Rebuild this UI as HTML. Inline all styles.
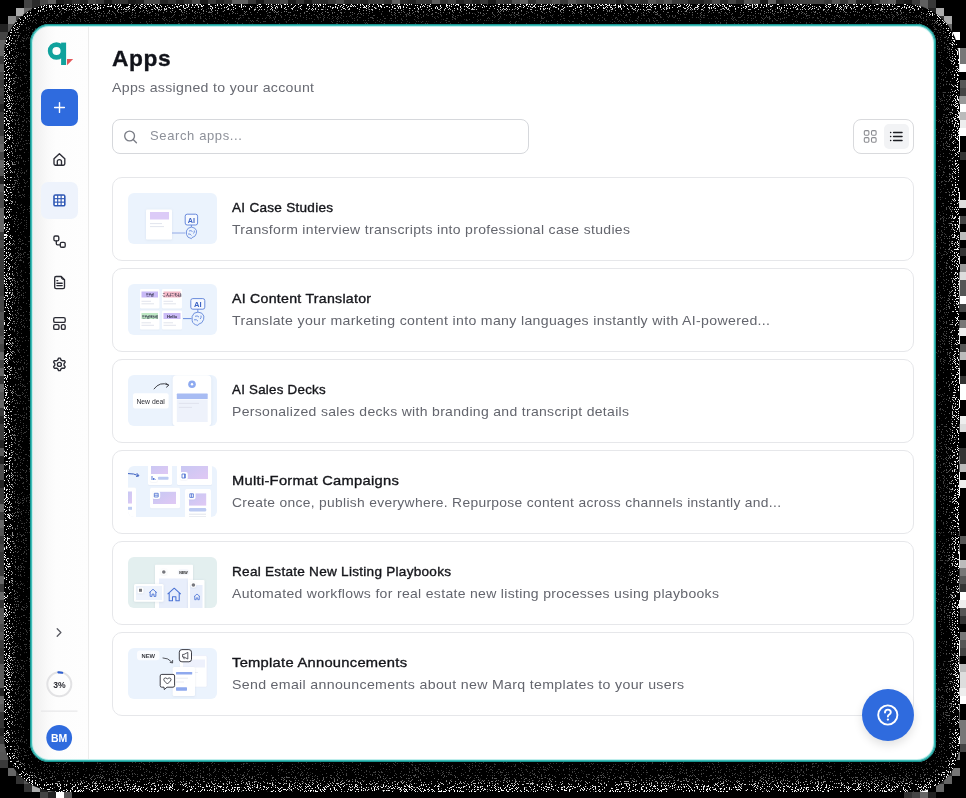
<!DOCTYPE html>
<html><head><meta charset="utf-8">
<style>
*{box-sizing:border-box;margin:0;padding:0}
html,body{width:966px;height:798px;overflow:hidden;background:#000}
body{position:relative;font-family:"Liberation Sans",sans-serif}
#win{will-change:transform}
#bg{position:absolute;left:0;top:0}
#win{position:absolute;left:30px;top:24px;width:906px;height:738px;border-radius:19px;background:#fff;
  border:2px solid #3aaeab;overflow:hidden}
#rim{position:absolute;left:30px;top:24px;width:906px;height:738px;border-radius:19px;border:1px solid #17948f;box-shadow:inset 0 0 0 1px #3ebcb7, inset 0 0 0 2px #c0eeec;pointer-events:none}
#side{position:absolute;left:0;top:0;width:57px;height:100%;
  background:linear-gradient(90deg,#eeeeee 0px,#f4f4f4 8px,#fafafa 16px,#fdfdfd 24px,#fefefe 100%);border-right:1px solid #ececec}
.abs{position:absolute}
h1{position:absolute;left:80px;top:20px;font-size:22px;font-weight:700;color:#11131a;letter-spacing:0.6px;-webkit-text-stroke:0.3px #11131a;transform-origin:0 0;transform:scaleX(1.035)}
.sub{position:absolute;left:80px;top:54px;font-size:13px;color:#686a72;letter-spacing:0.3px;white-space:nowrap;transform-origin:0 0;transform:scaleX(1.085)}
#search{position:absolute;left:80px;top:93px;width:417px;height:35px;border:1px solid #d6d8dc;border-radius:8px}
#search span{position:absolute;left:37px;top:8px;font-size:13px;color:#8d9099;letter-spacing:0.62px;white-space:nowrap}
#toggle{position:absolute;left:821px;top:93px;width:61px;height:35px;border:1px solid #d9dadd;border-radius:8px}
.card{position:absolute;left:80px;width:802px;height:84px;border:1px solid #e6e7ea;border-radius:10px;background:#fff}
.thumb{position:absolute;left:15px;top:15px;width:89px;height:51px;border-radius:6px;background:#ebf3fd;overflow:hidden}
.ttl{transform-origin:0 0;position:absolute;left:119px;top:22px;font-size:13px;color:#15161b;-webkit-text-stroke:0.35px #15161b;white-space:nowrap}
.dsc{transform-origin:0 0;position:absolute;left:119px;top:44px;font-size:13px;color:#63656d;white-space:nowrap}
#help{position:absolute;left:830px;top:663px;width:52px;height:52px;border-radius:50%;background:#2f6bde;
  box-shadow:0 4px 10px rgba(0,0,0,0.12)}
</style></head><body>
<svg id="bg" width="966" height="798">
<defs>
<filter id="dn" x="0" y="0" width="966" height="798" filterUnits="userSpaceOnUse" color-interpolation-filters="sRGB">
<feTurbulence type="fractalNoise" baseFrequency="1.35" numOctaves="1" seed="4" result="n"/>
<feColorMatrix in="n" type="matrix" values="1 0 0 0 0 1 0 0 0 0 1 0 0 0 0 0 0 0 0 1" result="n2"/>
<feComposite in="n2" in2="SourceGraphic" operator="arithmetic" k1="0" k2="1" k3="1" k4="-1" result="c"/>
<feColorMatrix in="c" type="matrix" values="0 0 0 0 1 0 0 0 0 1 0 0 0 0 1 40 0 0 0 -4"/>
</filter>
<mask id="bm" maskUnits="userSpaceOnUse" x="0" y="0" width="966" height="798"><path d="M54.00,4.00 H905.00 A54.00,54.00 0 0 1 959.00,58.00 V747.00 A45.00,45.00 0 0 1 914.00,792.00 H59.00 A55.00,55.00 0 0 1 4.00,737.00 V54.00 A50.00,50.00 0 0 1 54.00,4.00 Z" fill="#ffffff"/><path d="M53.69,5.25 H905.75 A51.81,51.81 0 0 1 957.56,57.06 V746.75 A43.38,43.38 0 0 1 914.19,790.12 H58.38 A52.75,52.75 0 0 1 5.62,737.38 V53.31 A48.06,48.06 0 0 1 53.69,5.25 Z" fill="#f7f7f7"/><path d="M53.38,6.50 H906.50 A49.62,49.62 0 0 1 956.12,56.12 V746.50 A41.75,41.75 0 0 1 914.38,788.25 H57.75 A50.50,50.50 0 0 1 7.25,737.75 V52.62 A46.12,46.12 0 0 1 53.38,6.50 Z" fill="#efefef"/><path d="M53.06,7.75 H907.25 A47.44,47.44 0 0 1 954.69,55.19 V746.25 A40.12,40.12 0 0 1 914.56,786.38 H57.12 A48.25,48.25 0 0 1 8.88,738.12 V51.94 A44.19,44.19 0 0 1 53.06,7.75 Z" fill="#e7e7e7"/><path d="M52.75,9.00 H908.00 A45.25,45.25 0 0 1 953.25,54.25 V746.00 A38.50,38.50 0 0 1 914.75,784.50 H56.50 A46.00,46.00 0 0 1 10.50,738.50 V51.25 A42.25,42.25 0 0 1 52.75,9.00 Z" fill="#bdbdbd"/><path d="M52.44,10.25 H908.75 A43.06,43.06 0 0 1 951.81,53.31 V745.75 A36.88,36.88 0 0 1 914.94,782.62 H55.88 A43.75,43.75 0 0 1 12.12,738.88 V50.56 A40.31,40.31 0 0 1 52.44,10.25 Z" fill="#8a8a8a"/><path d="M52.12,11.50 H909.50 A40.88,40.88 0 0 1 950.38,52.38 V745.50 A35.25,35.25 0 0 1 915.12,780.75 H55.25 A41.50,41.50 0 0 1 13.75,739.25 V49.88 A38.38,38.38 0 0 1 52.12,11.50 Z" fill="#666666"/><path d="M51.81,12.75 H910.25 A38.69,38.69 0 0 1 948.94,51.44 V745.25 A33.62,33.62 0 0 1 915.31,778.88 H54.62 A39.25,39.25 0 0 1 15.38,739.62 V49.19 A36.44,36.44 0 0 1 51.81,12.75 Z" fill="#595959"/><path d="M51.50,14.00 H911.00 A36.50,36.50 0 0 1 947.50,50.50 V745.00 A32.00,32.00 0 0 1 915.50,777.00 H54.00 A37.00,37.00 0 0 1 17.00,740.00 V48.50 A34.50,34.50 0 0 1 51.50,14.00 Z" fill="#4d4d4d"/><path d="M51.19,15.25 H911.75 A34.31,34.31 0 0 1 946.06,49.56 V744.75 A30.38,30.38 0 0 1 915.69,775.12 H53.38 A34.75,34.75 0 0 1 18.62,740.38 V47.81 A32.56,32.56 0 0 1 51.19,15.25 Z" fill="#424242"/><path d="M50.88,16.50 H912.50 A32.12,32.12 0 0 1 944.62,48.62 V744.50 A28.75,28.75 0 0 1 915.88,773.25 H52.75 A32.50,32.50 0 0 1 20.25,740.75 V47.12 A30.62,30.62 0 0 1 50.88,16.50 Z" fill="#404040"/><path d="M50.56,17.75 H913.25 A29.94,29.94 0 0 1 943.19,47.69 V744.25 A27.12,27.12 0 0 1 916.06,771.38 H52.12 A30.25,30.25 0 0 1 21.88,741.12 V46.44 A28.69,28.69 0 0 1 50.56,17.75 Z" fill="#3e3e3e"/><path d="M50.25,19.00 H914.00 A27.75,27.75 0 0 1 941.75,46.75 V744.00 A25.50,25.50 0 0 1 916.25,769.50 H51.50 A28.00,28.00 0 0 1 23.50,741.50 V45.75 A26.75,26.75 0 0 1 50.25,19.00 Z" fill="#3c3c3c"/><path d="M49.94,20.25 H914.75 A25.56,25.56 0 0 1 940.31,45.81 V743.75 A23.88,23.88 0 0 1 916.44,767.62 H50.88 A25.75,25.75 0 0 1 25.12,741.88 V45.06 A24.81,24.81 0 0 1 49.94,20.25 Z" fill="#393939"/><path d="M49.62,21.50 H915.50 A23.38,23.38 0 0 1 938.88,44.88 V743.50 A22.25,22.25 0 0 1 916.62,765.75 H50.25 A23.50,23.50 0 0 1 26.75,742.25 V44.38 A22.88,22.88 0 0 1 49.62,21.50 Z" fill="#373737"/><path d="M49.31,22.75 H916.25 A21.19,21.19 0 0 1 937.44,43.94 V743.25 A20.62,20.62 0 0 1 916.81,763.88 H49.62 A21.25,21.25 0 0 1 28.38,742.62 V43.69 A20.94,20.94 0 0 1 49.31,22.75 Z" fill="#353535"/><path d="M49.00,24.00 H917.00 A19.00,19.00 0 0 1 936.00,43.00 V743.00 A19.00,19.00 0 0 1 917.00,762.00 H49.00 A19.00,19.00 0 0 1 30.00,743.00 V43.00 A19.00,19.00 0 0 1 49.00,24.00 Z" fill="#333333"/></mask>
<clipPath id="aura"><path d="M54.00,4.00 H905.00 A54.00,54.00 0 0 1 959.00,58.00 V747.00 A45.00,45.00 0 0 1 914.00,792.00 H59.00 A55.00,55.00 0 0 1 4.00,737.00 V54.00 A50.00,50.00 0 0 1 54.00,4.00 Z"/></clipPath>
</defs>
<rect width="966" height="798" fill="#000"/>
<rect x="24" y="0" width="8" height="8" fill="#444444"/><rect x="32" y="0" width="8" height="8" fill="#2a2a2a"/><rect x="40" y="0" width="8" height="8" fill="#4a4a4a"/><rect x="48" y="0" width="8" height="8" fill="#606060"/><rect x="56" y="0" width="8" height="8" fill="#1a1a1a"/><rect x="64" y="0" width="8" height="8" fill="#222222"/><rect x="72" y="0" width="8" height="8" fill="#303030"/><rect x="80" y="0" width="8" height="8" fill="#222222"/><rect x="88" y="0" width="8" height="8" fill="#444444"/><rect x="96" y="0" width="8" height="8" fill="#383838"/><rect x="104" y="0" width="8" height="8" fill="#1a1a1a"/><rect x="112" y="0" width="8" height="8" fill="#303030"/><rect x="120" y="0" width="8" height="8" fill="#333333"/><rect x="128" y="0" width="8" height="8" fill="#1a1a1a"/><rect x="136" y="0" width="8" height="8" fill="#222222"/><rect x="144" y="0" width="8" height="8" fill="#4a4a4a"/><rect x="152" y="0" width="8" height="8" fill="#4a4a4a"/><rect x="160" y="0" width="8" height="8" fill="#222222"/><rect x="168" y="0" width="8" height="8" fill="#333333"/><rect x="176" y="0" width="8" height="8" fill="#222222"/><rect x="184" y="0" width="8" height="8" fill="#303030"/><rect x="192" y="0" width="8" height="8" fill="#4a4a4a"/><rect x="200" y="0" width="8" height="8" fill="#1a1a1a"/><rect x="208" y="0" width="8" height="8" fill="#383838"/><rect x="216" y="0" width="8" height="8" fill="#222222"/><rect x="224" y="0" width="8" height="8" fill="#333333"/><rect x="232" y="0" width="8" height="8" fill="#606060"/><rect x="240" y="0" width="8" height="8" fill="#606060"/><rect x="248" y="0" width="8" height="8" fill="#383838"/><rect x="256" y="0" width="8" height="8" fill="#1a1a1a"/><rect x="264" y="0" width="8" height="8" fill="#383838"/><rect x="272" y="0" width="8" height="8" fill="#383838"/><rect x="280" y="0" width="8" height="8" fill="#4a4a4a"/><rect x="288" y="0" width="8" height="8" fill="#1a1a1a"/><rect x="296" y="0" width="8" height="8" fill="#333333"/><rect x="304" y="0" width="8" height="8" fill="#1a1a1a"/><rect x="312" y="0" width="8" height="8" fill="#303030"/><rect x="320" y="0" width="8" height="8" fill="#2a2a2a"/><rect x="328" y="0" width="8" height="8" fill="#3a3a3a"/><rect x="336" y="0" width="8" height="8" fill="#4a4a4a"/><rect x="344" y="0" width="8" height="8" fill="#2a2a2a"/><rect x="352" y="0" width="8" height="8" fill="#303030"/><rect x="360" y="0" width="8" height="8" fill="#222222"/><rect x="368" y="0" width="8" height="8" fill="#383838"/><rect x="376" y="0" width="8" height="8" fill="#3a3a3a"/><rect x="384" y="0" width="8" height="8" fill="#303030"/><rect x="392" y="0" width="8" height="8" fill="#606060"/><rect x="400" y="0" width="8" height="8" fill="#2a2a2a"/><rect x="408" y="0" width="8" height="8" fill="#222222"/><rect x="416" y="0" width="8" height="8" fill="#383838"/><rect x="424" y="0" width="8" height="8" fill="#383838"/><rect x="432" y="0" width="8" height="8" fill="#606060"/><rect x="440" y="0" width="8" height="8" fill="#333333"/><rect x="448" y="0" width="8" height="8" fill="#444444"/><rect x="456" y="0" width="8" height="8" fill="#222222"/><rect x="464" y="0" width="8" height="8" fill="#303030"/><rect x="472" y="0" width="8" height="8" fill="#222222"/><rect x="480" y="0" width="8" height="8" fill="#383838"/><rect x="488" y="0" width="8" height="8" fill="#1a1a1a"/><rect x="496" y="0" width="8" height="8" fill="#383838"/><rect x="504" y="0" width="8" height="8" fill="#333333"/><rect x="512" y="0" width="8" height="8" fill="#555555"/><rect x="520" y="0" width="8" height="8" fill="#606060"/><rect x="528" y="0" width="8" height="8" fill="#303030"/><rect x="536" y="0" width="8" height="8" fill="#4a4a4a"/><rect x="544" y="0" width="8" height="8" fill="#444444"/><rect x="552" y="0" width="8" height="8" fill="#555555"/><rect x="560" y="0" width="8" height="8" fill="#383838"/><rect x="568" y="0" width="8" height="8" fill="#555555"/><rect x="576" y="0" width="8" height="8" fill="#444444"/><rect x="584" y="0" width="8" height="8" fill="#3a3a3a"/><rect x="592" y="0" width="8" height="8" fill="#333333"/><rect x="600" y="0" width="8" height="8" fill="#2a2a2a"/><rect x="608" y="0" width="8" height="8" fill="#333333"/><rect x="616" y="0" width="8" height="8" fill="#222222"/><rect x="624" y="0" width="8" height="8" fill="#383838"/><rect x="632" y="0" width="8" height="8" fill="#3a3a3a"/><rect x="640" y="0" width="8" height="8" fill="#303030"/><rect x="648" y="0" width="8" height="8" fill="#555555"/><rect x="656" y="0" width="8" height="8" fill="#444444"/><rect x="664" y="0" width="8" height="8" fill="#555555"/><rect x="672" y="0" width="8" height="8" fill="#3a3a3a"/><rect x="680" y="0" width="8" height="8" fill="#383838"/><rect x="688" y="0" width="8" height="8" fill="#222222"/><rect x="696" y="0" width="8" height="8" fill="#222222"/><rect x="704" y="0" width="8" height="8" fill="#303030"/><rect x="712" y="0" width="8" height="8" fill="#4a4a4a"/><rect x="720" y="0" width="8" height="8" fill="#2a2a2a"/><rect x="728" y="0" width="8" height="8" fill="#444444"/><rect x="736" y="0" width="8" height="8" fill="#2a2a2a"/><rect x="744" y="0" width="8" height="8" fill="#555555"/><rect x="752" y="0" width="8" height="8" fill="#4a4a4a"/><rect x="760" y="0" width="8" height="8" fill="#1a1a1a"/><rect x="768" y="0" width="8" height="8" fill="#606060"/><rect x="776" y="0" width="8" height="8" fill="#222222"/><rect x="784" y="0" width="8" height="8" fill="#303030"/><rect x="792" y="0" width="8" height="8" fill="#383838"/><rect x="800" y="0" width="8" height="8" fill="#444444"/><rect x="808" y="0" width="8" height="8" fill="#444444"/><rect x="816" y="0" width="8" height="8" fill="#444444"/><rect x="824" y="0" width="8" height="8" fill="#383838"/><rect x="832" y="0" width="8" height="8" fill="#555555"/><rect x="840" y="0" width="8" height="8" fill="#383838"/><rect x="848" y="0" width="8" height="8" fill="#555555"/><rect x="856" y="0" width="8" height="8" fill="#222222"/><rect x="864" y="0" width="8" height="8" fill="#222222"/><rect x="872" y="0" width="8" height="8" fill="#3a3a3a"/><rect x="880" y="0" width="8" height="8" fill="#555555"/><rect x="888" y="0" width="8" height="8" fill="#606060"/><rect x="896" y="0" width="8" height="8" fill="#222222"/><rect x="904" y="0" width="8" height="8" fill="#1a1a1a"/><rect x="912" y="0" width="8" height="8" fill="#3a3a3a"/><rect x="920" y="0" width="8" height="8" fill="#606060"/><rect x="928" y="0" width="8" height="8" fill="#383838"/><rect x="16" y="8" width="8" height="8" fill="#aaaaaa"/><rect x="24" y="8" width="8" height="8" fill="#666666"/><rect x="32" y="8" width="8" height="8" fill="#000000"/><rect x="920" y="8" width="8" height="8" fill="#888888"/><rect x="928" y="8" width="8" height="8" fill="#222222"/><rect x="936" y="8" width="8" height="8" fill="#aaaaaa"/><rect x="8" y="16" width="8" height="8" fill="#888888"/><rect x="16" y="16" width="8" height="8" fill="#444444"/><rect x="936" y="16" width="8" height="8" fill="#333333"/><rect x="944" y="16" width="8" height="8" fill="#aaaaaa"/><rect x="0" y="24" width="8" height="8" fill="#222222"/><rect x="8" y="24" width="8" height="8" fill="#555555"/><rect x="944" y="24" width="8" height="8" fill="#666666"/><rect x="952" y="24" width="8" height="8" fill="#000000"/><rect x="0" y="32" width="8" height="8" fill="#444444"/><rect x="8" y="32" width="8" height="8" fill="#000000"/><rect x="952" y="32" width="8" height="8" fill="#ffffff"/><rect x="0" y="40" width="8" height="8" fill="#666666"/><rect x="952" y="40" width="8" height="8" fill="#000000"/><rect x="960" y="40" width="8" height="8" fill="#000000"/><rect x="0" y="48" width="8" height="8" fill="#666666"/><rect x="952" y="48" width="8" height="8" fill="#ffffff"/><rect x="960" y="48" width="8" height="8" fill="#777777"/><rect x="0" y="56" width="8" height="8" fill="#3a3a3a"/><rect x="952" y="56" width="8" height="8" fill="#ffffff"/><rect x="960" y="56" width="8" height="8" fill="#777777"/><rect x="0" y="64" width="8" height="8" fill="#5a5a5a"/><rect x="952" y="64" width="8" height="8" fill="#dddddd"/><rect x="960" y="64" width="8" height="8" fill="#ffffff"/><rect x="0" y="72" width="8" height="8" fill="#444444"/><rect x="952" y="72" width="8" height="8" fill="#000000"/><rect x="960" y="72" width="8" height="8" fill="#000000"/><rect x="0" y="80" width="8" height="8" fill="#3a3a3a"/><rect x="952" y="80" width="8" height="8" fill="#000000"/><rect x="960" y="80" width="8" height="8" fill="#555555"/><rect x="0" y="88" width="8" height="8" fill="#444444"/><rect x="952" y="88" width="8" height="8" fill="#000000"/><rect x="960" y="88" width="8" height="8" fill="#444444"/><rect x="0" y="96" width="8" height="8" fill="#3a3a3a"/><rect x="952" y="96" width="8" height="8" fill="#777777"/><rect x="960" y="96" width="8" height="8" fill="#999999"/><rect x="0" y="104" width="8" height="8" fill="#222222"/><rect x="952" y="104" width="8" height="8" fill="#000000"/><rect x="960" y="104" width="8" height="8" fill="#ffffff"/><rect x="0" y="112" width="8" height="8" fill="#383838"/><rect x="952" y="112" width="8" height="8" fill="#dddddd"/><rect x="960" y="112" width="8" height="8" fill="#bbbbbb"/><rect x="0" y="120" width="8" height="8" fill="#3a3a3a"/><rect x="952" y="120" width="8" height="8" fill="#000000"/><rect x="960" y="120" width="8" height="8" fill="#eeeeee"/><rect x="0" y="128" width="8" height="8" fill="#383838"/><rect x="952" y="128" width="8" height="8" fill="#ffffff"/><rect x="960" y="128" width="8" height="8" fill="#ffffff"/><rect x="0" y="136" width="8" height="8" fill="#5a5a5a"/><rect x="952" y="136" width="8" height="8" fill="#ffffff"/><rect x="960" y="136" width="8" height="8" fill="#000000"/><rect x="0" y="144" width="8" height="8" fill="#666666"/><rect x="952" y="144" width="8" height="8" fill="#ffffff"/><rect x="960" y="144" width="8" height="8" fill="#000000"/><rect x="0" y="152" width="8" height="8" fill="#444444"/><rect x="952" y="152" width="8" height="8" fill="#000000"/><rect x="960" y="152" width="8" height="8" fill="#333333"/><rect x="0" y="160" width="8" height="8" fill="#666666"/><rect x="952" y="160" width="8" height="8" fill="#000000"/><rect x="960" y="160" width="8" height="8" fill="#000000"/><rect x="0" y="168" width="8" height="8" fill="#555555"/><rect x="952" y="168" width="8" height="8" fill="#000000"/><rect x="960" y="168" width="8" height="8" fill="#000000"/><rect x="0" y="176" width="8" height="8" fill="#222222"/><rect x="952" y="176" width="8" height="8" fill="#000000"/><rect x="960" y="176" width="8" height="8" fill="#000000"/><rect x="0" y="184" width="8" height="8" fill="#555555"/><rect x="952" y="184" width="8" height="8" fill="#000000"/><rect x="960" y="184" width="8" height="8" fill="#000000"/><rect x="0" y="192" width="8" height="8" fill="#444444"/><rect x="952" y="192" width="8" height="8" fill="#ffffff"/><rect x="960" y="192" width="8" height="8" fill="#000000"/><rect x="0" y="200" width="8" height="8" fill="#4a4a4a"/><rect x="952" y="200" width="8" height="8" fill="#dddddd"/><rect x="960" y="200" width="8" height="8" fill="#dddddd"/><rect x="0" y="208" width="8" height="8" fill="#666666"/><rect x="952" y="208" width="8" height="8" fill="#000000"/><rect x="960" y="208" width="8" height="8" fill="#000000"/><rect x="0" y="216" width="8" height="8" fill="#666666"/><rect x="952" y="216" width="8" height="8" fill="#eeeeee"/><rect x="960" y="216" width="8" height="8" fill="#444444"/><rect x="0" y="224" width="8" height="8" fill="#666666"/><rect x="952" y="224" width="8" height="8" fill="#999999"/><rect x="960" y="224" width="8" height="8" fill="#000000"/><rect x="0" y="232" width="8" height="8" fill="#3a3a3a"/><rect x="952" y="232" width="8" height="8" fill="#000000"/><rect x="960" y="232" width="8" height="8" fill="#bbbbbb"/><rect x="0" y="240" width="8" height="8" fill="#4a4a4a"/><rect x="952" y="240" width="8" height="8" fill="#444444"/><rect x="960" y="240" width="8" height="8" fill="#000000"/><rect x="0" y="248" width="8" height="8" fill="#383838"/><rect x="952" y="248" width="8" height="8" fill="#000000"/><rect x="960" y="248" width="8" height="8" fill="#333333"/><rect x="0" y="256" width="8" height="8" fill="#383838"/><rect x="952" y="256" width="8" height="8" fill="#dddddd"/><rect x="960" y="256" width="8" height="8" fill="#000000"/><rect x="0" y="264" width="8" height="8" fill="#383838"/><rect x="952" y="264" width="8" height="8" fill="#000000"/><rect x="960" y="264" width="8" height="8" fill="#999999"/><rect x="0" y="272" width="8" height="8" fill="#333333"/><rect x="952" y="272" width="8" height="8" fill="#777777"/><rect x="960" y="272" width="8" height="8" fill="#dddddd"/><rect x="0" y="280" width="8" height="8" fill="#3a3a3a"/><rect x="952" y="280" width="8" height="8" fill="#dddddd"/><rect x="960" y="280" width="8" height="8" fill="#555555"/><rect x="0" y="288" width="8" height="8" fill="#383838"/><rect x="952" y="288" width="8" height="8" fill="#bbbbbb"/><rect x="960" y="288" width="8" height="8" fill="#555555"/><rect x="0" y="296" width="8" height="8" fill="#444444"/><rect x="952" y="296" width="8" height="8" fill="#555555"/><rect x="960" y="296" width="8" height="8" fill="#ffffff"/><rect x="0" y="304" width="8" height="8" fill="#444444"/><rect x="952" y="304" width="8" height="8" fill="#333333"/><rect x="960" y="304" width="8" height="8" fill="#444444"/><rect x="0" y="312" width="8" height="8" fill="#555555"/><rect x="952" y="312" width="8" height="8" fill="#000000"/><rect x="960" y="312" width="8" height="8" fill="#000000"/><rect x="0" y="320" width="8" height="8" fill="#4a4a4a"/><rect x="952" y="320" width="8" height="8" fill="#444444"/><rect x="960" y="320" width="8" height="8" fill="#777777"/><rect x="0" y="328" width="8" height="8" fill="#444444"/><rect x="952" y="328" width="8" height="8" fill="#dddddd"/><rect x="960" y="328" width="8" height="8" fill="#eeeeee"/><rect x="0" y="336" width="8" height="8" fill="#555555"/><rect x="952" y="336" width="8" height="8" fill="#dddddd"/><rect x="960" y="336" width="8" height="8" fill="#000000"/><rect x="0" y="344" width="8" height="8" fill="#444444"/><rect x="952" y="344" width="8" height="8" fill="#000000"/><rect x="960" y="344" width="8" height="8" fill="#555555"/><rect x="0" y="352" width="8" height="8" fill="#666666"/><rect x="952" y="352" width="8" height="8" fill="#333333"/><rect x="960" y="352" width="8" height="8" fill="#bbbbbb"/><rect x="0" y="360" width="8" height="8" fill="#444444"/><rect x="952" y="360" width="8" height="8" fill="#444444"/><rect x="960" y="360" width="8" height="8" fill="#000000"/><rect x="0" y="368" width="8" height="8" fill="#666666"/><rect x="952" y="368" width="8" height="8" fill="#dddddd"/><rect x="960" y="368" width="8" height="8" fill="#000000"/><rect x="0" y="376" width="8" height="8" fill="#333333"/><rect x="952" y="376" width="8" height="8" fill="#ffffff"/><rect x="960" y="376" width="8" height="8" fill="#333333"/><rect x="0" y="384" width="8" height="8" fill="#666666"/><rect x="952" y="384" width="8" height="8" fill="#000000"/><rect x="960" y="384" width="8" height="8" fill="#ffffff"/><rect x="0" y="392" width="8" height="8" fill="#555555"/><rect x="952" y="392" width="8" height="8" fill="#000000"/><rect x="960" y="392" width="8" height="8" fill="#ffffff"/><rect x="0" y="400" width="8" height="8" fill="#666666"/><rect x="952" y="400" width="8" height="8" fill="#ffffff"/><rect x="960" y="400" width="8" height="8" fill="#000000"/><rect x="0" y="408" width="8" height="8" fill="#3a3a3a"/><rect x="952" y="408" width="8" height="8" fill="#000000"/><rect x="960" y="408" width="8" height="8" fill="#000000"/><rect x="0" y="416" width="8" height="8" fill="#222222"/><rect x="952" y="416" width="8" height="8" fill="#000000"/><rect x="960" y="416" width="8" height="8" fill="#eeeeee"/><rect x="0" y="424" width="8" height="8" fill="#3a3a3a"/><rect x="952" y="424" width="8" height="8" fill="#444444"/><rect x="960" y="424" width="8" height="8" fill="#dddddd"/><rect x="0" y="432" width="8" height="8" fill="#3a3a3a"/><rect x="952" y="432" width="8" height="8" fill="#000000"/><rect x="960" y="432" width="8" height="8" fill="#000000"/><rect x="0" y="440" width="8" height="8" fill="#222222"/><rect x="952" y="440" width="8" height="8" fill="#000000"/><rect x="960" y="440" width="8" height="8" fill="#000000"/><rect x="0" y="448" width="8" height="8" fill="#5a5a5a"/><rect x="952" y="448" width="8" height="8" fill="#333333"/><rect x="960" y="448" width="8" height="8" fill="#333333"/><rect x="0" y="456" width="8" height="8" fill="#222222"/><rect x="952" y="456" width="8" height="8" fill="#777777"/><rect x="960" y="456" width="8" height="8" fill="#333333"/><rect x="0" y="464" width="8" height="8" fill="#4a4a4a"/><rect x="952" y="464" width="8" height="8" fill="#555555"/><rect x="960" y="464" width="8" height="8" fill="#bbbbbb"/><rect x="0" y="472" width="8" height="8" fill="#4a4a4a"/><rect x="952" y="472" width="8" height="8" fill="#ffffff"/><rect x="960" y="472" width="8" height="8" fill="#000000"/><rect x="0" y="480" width="8" height="8" fill="#222222"/><rect x="952" y="480" width="8" height="8" fill="#dddddd"/><rect x="960" y="480" width="8" height="8" fill="#eeeeee"/><rect x="0" y="488" width="8" height="8" fill="#383838"/><rect x="952" y="488" width="8" height="8" fill="#ffffff"/><rect x="960" y="488" width="8" height="8" fill="#000000"/><rect x="0" y="496" width="8" height="8" fill="#383838"/><rect x="952" y="496" width="8" height="8" fill="#000000"/><rect x="960" y="496" width="8" height="8" fill="#000000"/><rect x="0" y="504" width="8" height="8" fill="#666666"/><rect x="952" y="504" width="8" height="8" fill="#000000"/><rect x="960" y="504" width="8" height="8" fill="#000000"/><rect x="0" y="512" width="8" height="8" fill="#3a3a3a"/><rect x="952" y="512" width="8" height="8" fill="#000000"/><rect x="960" y="512" width="8" height="8" fill="#000000"/><rect x="0" y="520" width="8" height="8" fill="#666666"/><rect x="952" y="520" width="8" height="8" fill="#000000"/><rect x="960" y="520" width="8" height="8" fill="#000000"/><rect x="0" y="528" width="8" height="8" fill="#555555"/><rect x="952" y="528" width="8" height="8" fill="#444444"/><rect x="960" y="528" width="8" height="8" fill="#000000"/><rect x="0" y="536" width="8" height="8" fill="#383838"/><rect x="952" y="536" width="8" height="8" fill="#000000"/><rect x="960" y="536" width="8" height="8" fill="#555555"/><rect x="0" y="544" width="8" height="8" fill="#444444"/><rect x="952" y="544" width="8" height="8" fill="#777777"/><rect x="960" y="544" width="8" height="8" fill="#000000"/><rect x="0" y="552" width="8" height="8" fill="#333333"/><rect x="952" y="552" width="8" height="8" fill="#eeeeee"/><rect x="960" y="552" width="8" height="8" fill="#000000"/><rect x="0" y="560" width="8" height="8" fill="#333333"/><rect x="952" y="560" width="8" height="8" fill="#eeeeee"/><rect x="960" y="560" width="8" height="8" fill="#bbbbbb"/><rect x="0" y="568" width="8" height="8" fill="#383838"/><rect x="952" y="568" width="8" height="8" fill="#333333"/><rect x="960" y="568" width="8" height="8" fill="#777777"/><rect x="0" y="576" width="8" height="8" fill="#666666"/><rect x="952" y="576" width="8" height="8" fill="#444444"/><rect x="960" y="576" width="8" height="8" fill="#555555"/><rect x="0" y="584" width="8" height="8" fill="#383838"/><rect x="952" y="584" width="8" height="8" fill="#777777"/><rect x="960" y="584" width="8" height="8" fill="#333333"/><rect x="0" y="592" width="8" height="8" fill="#666666"/><rect x="952" y="592" width="8" height="8" fill="#000000"/><rect x="960" y="592" width="8" height="8" fill="#ffffff"/><rect x="0" y="600" width="8" height="8" fill="#333333"/><rect x="952" y="600" width="8" height="8" fill="#ffffff"/><rect x="960" y="600" width="8" height="8" fill="#eeeeee"/><rect x="0" y="608" width="8" height="8" fill="#555555"/><rect x="952" y="608" width="8" height="8" fill="#000000"/><rect x="960" y="608" width="8" height="8" fill="#555555"/><rect x="0" y="616" width="8" height="8" fill="#5a5a5a"/><rect x="952" y="616" width="8" height="8" fill="#000000"/><rect x="960" y="616" width="8" height="8" fill="#333333"/><rect x="0" y="624" width="8" height="8" fill="#4a4a4a"/><rect x="952" y="624" width="8" height="8" fill="#000000"/><rect x="960" y="624" width="8" height="8" fill="#000000"/><rect x="0" y="632" width="8" height="8" fill="#555555"/><rect x="952" y="632" width="8" height="8" fill="#000000"/><rect x="960" y="632" width="8" height="8" fill="#777777"/><rect x="0" y="640" width="8" height="8" fill="#3a3a3a"/><rect x="952" y="640" width="8" height="8" fill="#eeeeee"/><rect x="960" y="640" width="8" height="8" fill="#555555"/><rect x="0" y="648" width="8" height="8" fill="#333333"/><rect x="952" y="648" width="8" height="8" fill="#ffffff"/><rect x="960" y="648" width="8" height="8" fill="#444444"/><rect x="0" y="656" width="8" height="8" fill="#3a3a3a"/><rect x="952" y="656" width="8" height="8" fill="#555555"/><rect x="960" y="656" width="8" height="8" fill="#000000"/><rect x="0" y="664" width="8" height="8" fill="#5a5a5a"/><rect x="952" y="664" width="8" height="8" fill="#ffffff"/><rect x="960" y="664" width="8" height="8" fill="#bbbbbb"/><rect x="0" y="672" width="8" height="8" fill="#5a5a5a"/><rect x="952" y="672" width="8" height="8" fill="#333333"/><rect x="960" y="672" width="8" height="8" fill="#dddddd"/><rect x="0" y="680" width="8" height="8" fill="#555555"/><rect x="952" y="680" width="8" height="8" fill="#000000"/><rect x="960" y="680" width="8" height="8" fill="#dddddd"/><rect x="0" y="688" width="8" height="8" fill="#222222"/><rect x="952" y="688" width="8" height="8" fill="#bbbbbb"/><rect x="960" y="688" width="8" height="8" fill="#eeeeee"/><rect x="0" y="696" width="8" height="8" fill="#666666"/><rect x="952" y="696" width="8" height="8" fill="#000000"/><rect x="960" y="696" width="8" height="8" fill="#ffffff"/><rect x="0" y="704" width="8" height="8" fill="#555555"/><rect x="952" y="704" width="8" height="8" fill="#999999"/><rect x="960" y="704" width="8" height="8" fill="#000000"/><rect x="0" y="712" width="8" height="8" fill="#333333"/><rect x="952" y="712" width="8" height="8" fill="#555555"/><rect x="960" y="712" width="8" height="8" fill="#000000"/><rect x="0" y="720" width="8" height="8" fill="#333333"/><rect x="952" y="720" width="8" height="8" fill="#777777"/><rect x="960" y="720" width="8" height="8" fill="#777777"/><rect x="0" y="728" width="8" height="8" fill="#222222"/><rect x="952" y="728" width="8" height="8" fill="#000000"/><rect x="960" y="728" width="8" height="8" fill="#777777"/><rect x="0" y="736" width="8" height="8" fill="#3a3a3a"/><rect x="952" y="736" width="8" height="8" fill="#ffffff"/><rect x="960" y="736" width="8" height="8" fill="#777777"/><rect x="0" y="744" width="8" height="8" fill="#5a5a5a"/><rect x="952" y="744" width="8" height="8" fill="#000000"/><rect x="960" y="744" width="8" height="8" fill="#444444"/><rect x="0" y="752" width="8" height="8" fill="#555555"/><rect x="8" y="752" width="8" height="8" fill="#333333"/><rect x="952" y="752" width="8" height="8" fill="#777777"/><rect x="960" y="752" width="8" height="8" fill="#000000"/><rect x="0" y="760" width="8" height="8" fill="#3a3a3a"/><rect x="8" y="760" width="8" height="8" fill="#000000"/><rect x="952" y="760" width="8" height="8" fill="#000000"/><rect x="8" y="768" width="8" height="8" fill="#666666"/><rect x="16" y="768" width="8" height="8" fill="#222222"/><rect x="944" y="768" width="8" height="8" fill="#333333"/><rect x="952" y="768" width="8" height="8" fill="#777777"/><rect x="16" y="776" width="8" height="8" fill="#333333"/><rect x="24" y="776" width="8" height="8" fill="#555555"/><rect x="936" y="776" width="8" height="8" fill="#333333"/><rect x="944" y="776" width="8" height="8" fill="#666666"/><rect x="24" y="784" width="8" height="8" fill="#333333"/><rect x="32" y="784" width="8" height="8" fill="#aaaaaa"/><rect x="40" y="784" width="8" height="8" fill="#222222"/><rect x="48" y="784" width="8" height="8" fill="#888888"/><rect x="920" y="784" width="8" height="8" fill="#ffffff"/><rect x="928" y="784" width="8" height="8" fill="#000000"/><rect x="936" y="784" width="8" height="8" fill="#666666"/><rect x="40" y="792" width="8" height="8" fill="#444444"/><rect x="48" y="792" width="8" height="8" fill="#222222"/><rect x="56" y="792" width="8" height="8" fill="#ffffff"/><rect x="64" y="792" width="8" height="8" fill="#555555"/><rect x="904" y="792" width="8" height="8" fill="#333333"/><rect x="912" y="792" width="8" height="8" fill="#444444"/><rect x="920" y="792" width="8" height="8" fill="#666666"/><rect x="928" y="792" width="8" height="8" fill="#222222"/>
<path d="M54.00,4.00 H905.00 A54.00,54.00 0 0 1 959.00,58.00 V747.00 A45.00,45.00 0 0 1 914.00,792.00 H59.00 A55.00,55.00 0 0 1 4.00,737.00 V54.00 A50.00,50.00 0 0 1 54.00,4.00 Z" fill="#000"/>
<g clip-path="url(#aura)"><g mask="url(#bm)"><g filter="url(#dn)"><path d="M54.00,4.00 H905.00 A54.00,54.00 0 0 1 959.00,58.00 V747.00 A45.00,45.00 0 0 1 914.00,792.00 H59.00 A55.00,55.00 0 0 1 4.00,737.00 V54.00 A50.00,50.00 0 0 1 54.00,4.00 Z" fill="#888888"/><path d="M53.69,5.25 H905.75 A51.81,51.81 0 0 1 957.56,57.06 V746.75 A43.38,43.38 0 0 1 914.19,790.12 H58.38 A52.75,52.75 0 0 1 5.62,737.38 V53.31 A48.06,48.06 0 0 1 53.69,5.25 Z" fill="#878787"/><path d="M53.38,6.50 H906.50 A49.62,49.62 0 0 1 956.12,56.12 V746.50 A41.75,41.75 0 0 1 914.38,788.25 H57.75 A50.50,50.50 0 0 1 7.25,737.75 V52.62 A46.12,46.12 0 0 1 53.38,6.50 Z" fill="#868686"/><path d="M53.06,7.75 H907.25 A47.44,47.44 0 0 1 954.69,55.19 V746.25 A40.12,40.12 0 0 1 914.56,786.38 H57.12 A48.25,48.25 0 0 1 8.88,738.12 V51.94 A44.19,44.19 0 0 1 53.06,7.75 Z" fill="#858585"/><path d="M52.75,9.00 H908.00 A45.25,45.25 0 0 1 953.25,54.25 V746.00 A38.50,38.50 0 0 1 914.75,784.50 H56.50 A46.00,46.00 0 0 1 10.50,738.50 V51.25 A42.25,42.25 0 0 1 52.75,9.00 Z" fill="#828282"/><path d="M52.44,10.25 H908.75 A43.06,43.06 0 0 1 951.81,53.31 V745.75 A36.88,36.88 0 0 1 914.94,782.62 H55.88 A43.75,43.75 0 0 1 12.12,738.88 V50.56 A40.31,40.31 0 0 1 52.44,10.25 Z" fill="#808080"/><path d="M52.12,11.50 H909.50 A40.88,40.88 0 0 1 950.38,52.38 V745.50 A35.25,35.25 0 0 1 915.12,780.75 H55.25 A41.50,41.50 0 0 1 13.75,739.25 V49.88 A38.38,38.38 0 0 1 52.12,11.50 Z" fill="#7e7e7e"/><path d="M51.81,12.75 H910.25 A38.69,38.69 0 0 1 948.94,51.44 V745.25 A33.62,33.62 0 0 1 915.31,778.88 H54.62 A39.25,39.25 0 0 1 15.38,739.62 V49.19 A36.44,36.44 0 0 1 51.81,12.75 Z" fill="#7e7e7e"/><path d="M51.50,14.00 H911.00 A36.50,36.50 0 0 1 947.50,50.50 V745.00 A32.00,32.00 0 0 1 915.50,777.00 H54.00 A37.00,37.00 0 0 1 17.00,740.00 V48.50 A34.50,34.50 0 0 1 51.50,14.00 Z" fill="#7d7d7d"/><path d="M51.19,15.25 H911.75 A34.31,34.31 0 0 1 946.06,49.56 V744.75 A30.38,30.38 0 0 1 915.69,775.12 H53.38 A34.75,34.75 0 0 1 18.62,740.38 V47.81 A32.56,32.56 0 0 1 51.19,15.25 Z" fill="#7d7d7d"/><path d="M50.88,16.50 H912.50 A32.12,32.12 0 0 1 944.62,48.62 V744.50 A28.75,28.75 0 0 1 915.88,773.25 H52.75 A32.50,32.50 0 0 1 20.25,740.75 V47.12 A30.62,30.62 0 0 1 50.88,16.50 Z" fill="#7c7c7c"/><path d="M50.56,17.75 H913.25 A29.94,29.94 0 0 1 943.19,47.69 V744.25 A27.12,27.12 0 0 1 916.06,771.38 H52.12 A30.25,30.25 0 0 1 21.88,741.12 V46.44 A28.69,28.69 0 0 1 50.56,17.75 Z" fill="#7c7c7c"/><path d="M50.25,19.00 H914.00 A27.75,27.75 0 0 1 941.75,46.75 V744.00 A25.50,25.50 0 0 1 916.25,769.50 H51.50 A28.00,28.00 0 0 1 23.50,741.50 V45.75 A26.75,26.75 0 0 1 50.25,19.00 Z" fill="#7a7a7a"/><path d="M49.94,20.25 H914.75 A25.56,25.56 0 0 1 940.31,45.81 V743.75 A23.88,23.88 0 0 1 916.44,767.62 H50.88 A25.75,25.75 0 0 1 25.12,741.88 V45.06 A24.81,24.81 0 0 1 49.94,20.25 Z" fill="#787878"/><path d="M49.62,21.50 H915.50 A23.38,23.38 0 0 1 938.88,44.88 V743.50 A22.25,22.25 0 0 1 916.62,765.75 H50.25 A23.50,23.50 0 0 1 26.75,742.25 V44.38 A22.88,22.88 0 0 1 49.62,21.50 Z" fill="#767676"/><path d="M49.31,22.75 H916.25 A21.19,21.19 0 0 1 937.44,43.94 V743.25 A20.62,20.62 0 0 1 916.81,763.88 H49.62 A21.25,21.25 0 0 1 28.38,742.62 V43.69 A20.94,20.94 0 0 1 49.31,22.75 Z" fill="#717171"/><path d="M49.00,24.00 H917.00 A19.00,19.00 0 0 1 936.00,43.00 V743.00 A19.00,19.00 0 0 1 917.00,762.00 H49.00 A19.00,19.00 0 0 1 30.00,743.00 V43.00 A19.00,19.00 0 0 1 49.00,24.00 Z" fill="#6b6b6b"/></g></g></g>
</svg>
<div id="win">
  <div id="side"></div>
  <h1>Apps</h1>
  <div class="sub">Apps assigned to your account</div>
  <div id="search"><span>Search apps...</span></div>
  <div id="toggle"></div>

  <div class="card" style="top:151px"><div class="thumb"><svg width="89" height="52" viewBox="0 0 89 52">
<defs><filter id="sh" x="-20%" y="-20%" width="140%" height="140%"><feDropShadow dx="0" dy="0.5" stdDeviation="0.8" flood-color="#8090b0" flood-opacity="0.18"/></filter></defs>
<rect x="18" y="16.5" width="26" height="30" rx="1.2" fill="#fff" filter="url(#sh)"/>
<rect x="22" y="19" width="19" height="7.5" fill="#dccbf7"/>
<path d="M22 30.6 H34 M22 33.6 H36" stroke="#d9dde8" stroke-width="0.8"/>
<path d="M44 40 H57.5" stroke="#93aae6" stroke-width="1"/>
<rect x="57.2" y="21.2" width="12.4" height="10.8" rx="2" fill="#f6f9ff" stroke="#5a7fd8" stroke-width="0.9"/>
<text x="63.4" y="29.6" font-family="Liberation Sans" font-weight="700" font-size="7.2" fill="#3d64c4" text-anchor="middle">AI</text>
<path d="M63.4 32 V34" stroke="#5a7fd8" stroke-width="0.8"/>
<path d="M60.2 35.2 Q63.5 33 66.8 35.2 Q69.5 37.5 68.3 40.6 Q67.5 44 64 44.6 L63.4 45.6 Q59 44.8 58.5 41.5 Q57.5 37.5 60.2 35.2 Z M61 38 Q63 37 64.5 38.5 M60 41 Q62.5 40.5 63.5 42.5 M65.5 40.5 Q66.8 39 66.3 37.5" fill="none" stroke="#5a7fd8" stroke-width="0.8"/>
</svg></div><div class="ttl" style="letter-spacing:0.25px;transform:scaleX(1.0445)">AI Case Studies</div><div class="dsc" style="letter-spacing:0.3px;transform:scaleX(1.0765)">Transform interview transcripts into professional case studies</div></div>
  <div class="card" style="top:242px"><div class="thumb"><svg width="89" height="52" viewBox="0 0 89 52">
<defs><filter id="sh2" x="-20%" y="-20%" width="140%" height="140%"><feDropShadow dx="0" dy="0.4" stdDeviation="0.6" flood-color="#8090b0" flood-opacity="0.15"/></filter></defs>
<rect x="12" y="5" width="19.5" height="19.5" rx="1" fill="#fff" filter="url(#sh2)"/>
<rect x="13.5" y="7.5" width="16.5" height="6" fill="#c9baf6"/>
<text x="21.75" y="12.3" font-family="Liberation Sans" font-weight="700" font-size="4.2" fill="#2a2a40" text-anchor="middle">안녕</text>
<path d="M13.5 17.3 H23 M13.5 19.8 H26" stroke="#d4d8e4" stroke-width="0.7"/>
<rect x="34" y="5" width="20" height="19.5" rx="1" fill="#fff" filter="url(#sh2)"/>
<rect x="35.5" y="7.5" width="17" height="6" fill="#f3bac8"/>
<text x="44.0" y="12.3" font-family="Liberation Sans" font-weight="700" font-size="4.2" fill="#2a2a40" text-anchor="middle">こんにちは</text>
<path d="M35.5 17.3 H45 M35.5 19.8 H48" stroke="#d4d8e4" stroke-width="0.7"/>
<rect x="12" y="26.5" width="19.5" height="19" rx="1" fill="#fff" filter="url(#sh2)"/>
<rect x="13.5" y="29.0" width="16.5" height="6" fill="#bfe8c5"/>
<text x="21.75" y="33.8" font-family="Liberation Sans" font-weight="700" font-size="4.2" fill="#2a2a40" text-anchor="middle">안녕하세</text>
<path d="M13.5 38.8 H23 M13.5 41.3 H26" stroke="#d4d8e4" stroke-width="0.7"/>
<rect x="34" y="26.5" width="20" height="19" rx="1" fill="#fff" filter="url(#sh2)"/>
<rect x="35.5" y="29.0" width="17" height="6" fill="#cbbbf6"/>
<text x="44.0" y="33.8" font-family="Liberation Sans" font-weight="700" font-size="4.2" fill="#2a2a40" text-anchor="middle">Hello</text>
<path d="M35.5 38.8 H45 M35.5 41.3 H48" stroke="#d4d8e4" stroke-width="0.7"/>
<path d="M55 34.6 H63.6" stroke="#5a7fd8" stroke-width="0.9"/>
<rect x="62.8" y="14.6" width="14" height="10.6" rx="2" fill="#f6f9ff" stroke="#5a7fd8" stroke-width="0.9"/>
<text x="69.8" y="23" font-family="Liberation Sans" font-weight="700" font-size="7.6" fill="#3d64c4" text-anchor="middle">AI</text>
<path d="M69.8 25.2 V28" stroke="#5a7fd8" stroke-width="0.8"/>
<path d="M66.2 29.2 Q70 27 73.8 29.2 Q77 31.8 75.6 35.5 Q74.6 39.4 70.6 40.2 L69.8 41.4 Q64.8 40.4 64.2 36.8 Q63 32 66.2 29.2 Z M67 32.3 Q69.4 31.2 71 33 M66 35.8 Q68.8 35 70 37.2 M72.2 35 Q73.6 33.4 73 31.6" fill="none" stroke="#5a7fd8" stroke-width="0.85"/>
</svg></div><div class="ttl" style="letter-spacing:0.25px;transform:scaleX(1.0876)">AI Content Translator</div><div class="dsc" style="letter-spacing:0.3px;transform:scaleX(1.0860)">Translate your marketing content into many languages instantly with AI-powered...</div></div>
  <div class="card" style="top:333px"><div class="thumb"><svg width="89" height="52" viewBox="0 0 89 52">
<defs><filter id="sh3" x="-20%" y="-20%" width="140%" height="140%"><feDropShadow dx="0" dy="0.5" stdDeviation="0.9" flood-color="#8090b0" flood-opacity="0.2"/></filter></defs>
<rect x="5" y="18.3" width="35.6" height="15.2" rx="2" fill="#fff"/>
<text x="22.6" y="28.6" font-family="Liberation Sans" font-weight="400" font-size="6.8" fill="#2e2f36" text-anchor="middle">New deal</text>
<path d="M25.8 14.2 Q32 6 40.5 10" fill="none" stroke="#2e2f36" stroke-width="0.9"/>
<path d="M37.6 8.2 L40.8 10.2 L38.2 12.4" fill="none" stroke="#2e2f36" stroke-width="0.9" stroke-linejoin="round"/>
<rect x="44.7" y="0.3" width="38.5" height="51" rx="4" fill="#fff" filter="url(#sh3)"/>
<circle cx="64" cy="9.3" r="3.8" fill="#8eaaf0"/>
<circle cx="64" cy="9.3" r="1.2" fill="#fff"/>
<rect x="48.8" y="18.6" width="30.9" height="5.4" rx="0.6" fill="#a8bcf3"/>
<rect x="48.8" y="24.5" width="30.9" height="22.5" fill="#eef2fb"/>
<path d="M50.8 28.4 H71 M50.8 32.4 H64" stroke="#d8dde8" stroke-width="0.7"/>
</svg></div><div class="ttl" style="letter-spacing:0.25px;transform:scaleX(1.0246)">AI Sales Decks</div><div class="dsc" style="letter-spacing:0.3px;transform:scaleX(1.0753)">Personalized sales decks with branding and transcript details</div></div>
  <div class="card" style="top:424px"><div class="thumb"><svg width="89" height="52" viewBox="0 0 89 52">
<defs><filter id="sh4" x="-20%" y="-20%" width="140%" height="140%"><feDropShadow dx="0" dy="0.4" stdDeviation="0.7" flood-color="#8090b0" flood-opacity="0.18"/></filter>
<linearGradient id="pg" x1="0" y1="0" x2="1" y2="1"><stop offset="0" stop-color="#c6c8f3"/><stop offset="1" stop-color="#e0c8f4"/></linearGradient></defs>
<rect x="20" y="-3" width="24" height="22" rx="1.5" fill="#fff" filter="url(#sh4)"/>
<rect x="23" y="-3" width="17" height="11" fill="url(#pg)"/>
<rect x="30" y="10.8" width="10.5" height="3" rx="0.8" fill="#bccaf2"/>
<rect x="21.8" y="8" width="8" height="8" rx="2" fill="#fff" filter="url(#sh4)"/>
<path d="M24 10 V14 M25.5 12 L25.5 14 M25.5 12 L27.5 14" stroke="#4a6fd0" stroke-width="0.9"/>
<rect x="49" y="-3" width="35" height="22" rx="1.5" fill="#fff" filter="url(#sh4)"/>
<rect x="53" y="-3" width="27" height="16" fill="url(#pg)"/>
<rect x="51.8" y="6" width="8" height="8" rx="2" fill="#fff" filter="url(#sh4)"/>
<path d="M54 8 H57.4 V12 H54 Z M56.5 8 V12" fill="none" stroke="#4a6fd0" stroke-width="0.8"/>
<rect x="-3" y="21.5" width="11" height="32" rx="1.5" fill="#fff" filter="url(#sh4)"/>
<rect x="0" y="25.5" width="4" height="12" fill="url(#pg)"/>
<rect x="0" y="40.8" width="4" height="3" fill="#bccaf2"/>
<rect x="22" y="21.8" width="30" height="20.5" rx="1.5" fill="#fff" filter="url(#sh4)"/>
<rect x="25" y="25.8" width="23" height="12.2" fill="url(#pg)"/>
<rect x="24.2" y="25" width="8" height="8" rx="2" fill="#fff" filter="url(#sh4)"/>
<path d="M26.3 27.3 H30.2 V31 H26.3 Z M26.3 29.2 H30.2" fill="none" stroke="#4a6fd0" stroke-width="0.8"/>
<rect x="57" y="23" width="26" height="31" rx="1.5" fill="#fff" filter="url(#sh4)"/>
<rect x="61" y="27.4" width="17.2" height="12.2" fill="url(#pg)"/>
<rect x="59.6" y="25.6" width="8" height="8" rx="2" fill="#fff" filter="url(#sh4)"/>
<path d="M61.8 27.8 H65.4 V31.4 H61.8 Z M63.6 27.8 V31.4" fill="none" stroke="#4a6fd0" stroke-width="0.8"/>
<rect x="61" y="42" width="17.2" height="3.4" rx="1.2" fill="#bccaf2"/>
<path d="M61 48.2 H78 M61 50.8 H78" stroke="#d4d8e4" stroke-width="0.7"/>
<path d="M0 7.6 Q6 7.4 10.2 9.6" fill="none" stroke="#3b5fc0" stroke-width="1"/>
<path d="M8.8 7.2 L11 9.8 L8.2 10.6" fill="none" stroke="#3b5fc0" stroke-width="1"/>
</svg></div><div class="ttl" style="letter-spacing:0.25px;transform:scaleX(1.1305)">Multi-Format Campaigns</div><div class="dsc" style="letter-spacing:0.3px;transform:scaleX(1.0625)">Create once, publish everywhere. Repurpose content across channels instantly and...</div></div>
  <div class="card" style="top:515px"><div class="thumb" style="background:#e3efef"><svg width="89" height="52" viewBox="0 0 89 52">
<defs><filter id="sh5" x="-20%" y="-20%" width="140%" height="140%"><feDropShadow dx="0" dy="0.5" stdDeviation="0.8" flood-color="#708090" flood-opacity="0.18"/></filter></defs>
<rect x="27" y="7.8" width="38" height="47" rx="1" fill="#fff" filter="url(#sh5)"/>
<rect x="31" y="21.5" width="29" height="32" fill="#e8eefb"/>
<circle cx="35.8" cy="15" r="2.8" fill="#fff" filter="url(#sh5)"/>
<circle cx="35.8" cy="15" r="1.8" fill="#76777d"/>
<rect x="49.5" y="12.2" width="12" height="6" rx="3" fill="#f4f6fb"/>
<text x="55.5" y="16.8" font-family="Liberation Sans" font-weight="700" font-size="3.6" fill="#222" text-anchor="middle">NEW</text>
<path d="M39.6 37.14 L46.2 31.199999999999996 L52.800000000000004 37.14 M41.184000000000005 35.82 V43.739999999999995 H44.484 V39.779999999999994 H47.916000000000004 V43.739999999999995 H51.216 V35.82" fill="none" stroke="#4a72d4" stroke-width="1.05" stroke-linejoin="round"/>
<rect x="6" y="27" width="29.6" height="17.8" rx="1.5" fill="#fff" filter="url(#sh5)"/>
<rect x="8" y="29" width="26" height="14" fill="#eef3fc"/>
<rect x="9.6" y="30.4" width="5.8" height="5.8" rx="1" fill="#fff" filter="url(#sh5)"/>
<rect x="11" y="31.8" width="3" height="3" fill="#76777d"/>
<path d="M21.25 35.625 L25 32.25 L28.75 35.625 M22.15 34.875 V39.375 H24.025 V37.125 H25.975 V39.375 H27.85 V34.875" fill="none" stroke="#4a72d4" stroke-width="0.9" stroke-linejoin="round"/>
<rect x="60" y="23" width="16.5" height="31" rx="1" fill="#fff" filter="url(#sh5)"/>
<rect x="62" y="28" width="12.5" height="25" fill="#e8eefb"/>
<circle cx="65.4" cy="28" r="2.8" fill="#fff" filter="url(#sh5)"/>
<circle cx="65.4" cy="28" r="1.8" fill="#76777d"/>
<path d="M66.0 39.7 L69 37.0 L72.0 39.7 M66.72 39.1 V42.7 H68.22 V40.9 H69.78 V42.7 H71.28 V39.1" fill="none" stroke="#4a72d4" stroke-width="0.8" stroke-linejoin="round"/>
</svg></div><div class="ttl" style="letter-spacing:0.25px;transform:scaleX(1.0448)">Real Estate New Listing Playbooks</div><div class="dsc" style="letter-spacing:0.3px;transform:scaleX(1.0767)">Automated workflows for real estate new listing processes using playbooks</div></div>
  <div class="card" style="top:606px"><div class="thumb"><svg width="89" height="52" viewBox="0 0 89 52">
<defs><filter id="sh6" x="-20%" y="-20%" width="140%" height="140%"><feDropShadow dx="0" dy="0.5" stdDeviation="0.8" flood-color="#8090b0" flood-opacity="0.2"/></filter></defs>
<rect x="9" y="2.6" width="22.5" height="9.6" rx="3" fill="#fbfcff"/>
<text x="20.3" y="9.8" font-family="Liberation Sans" font-weight="700" font-size="5.8" fill="#3a3b42" text-anchor="middle">NEW</text>
<path d="M34.6 9.9 Q40 9.6 44.4 14.6" fill="none" stroke="#3a3b42" stroke-width="0.85"/>
<path d="M41.8 14.4 L44.6 14.9 L44.6 12" fill="none" stroke="#3a3b42" stroke-width="0.85"/>
<rect x="51.5" y="7.6" width="27.5" height="31.5" rx="1.5" fill="#fff" stroke="#e6eaf6" stroke-width="0.6"/>
<rect x="55" y="11.5" width="22" height="8" fill="#eef1fc"/>
<path d="M55 24.5 H70" stroke="#e2e6f0" stroke-width="0.7"/>
<rect x="51.3" y="1.6" width="12.2" height="12.2" rx="2.6" fill="#fff" stroke="#34353d" stroke-width="0.95"/>
<path d="M54.6 6.4 H56 L59.8 4.4 V11 L56 9 H54.6 Z M55.6 9 L56.2 11.2" fill="none" stroke="#34353d" stroke-width="0.8" stroke-linejoin="round"/>
<rect x="44.7" y="19" width="22.3" height="29" rx="1.5" fill="#fff" filter="url(#sh6)"/>
<rect x="48" y="24" width="16.2" height="2.6" rx="0.6" fill="#8fa9ee"/>
<path d="M48 30.2 H60 M48 34 H56" stroke="#dfe3ee" stroke-width="0.7"/>
<rect x="48" y="39.2" width="11" height="3.5" rx="0.6" fill="#8fa9ee"/>
<path d="M33.8 26.4 H45 Q46.6 26.4 46.6 28 V37.6 Q46.6 39.2 45 39.2 H39 L36.3 41.6 L36 39.2 H33.8 Q32.2 39.2 32.2 37.6 V28 Q32.2 26.4 33.8 26.4 Z" fill="#fff" stroke="#34353d" stroke-width="0.95" stroke-linejoin="round"/>
<path d="M39.4 36 L36.4 33 Q35.2 31.6 36.2 30.4 Q37.6 29.2 39.4 30.8 Q41.2 29.2 42.6 30.4 Q43.6 31.6 42.4 33 Z" fill="none" stroke="#34353d" stroke-width="0.85" stroke-linejoin="round"/>
</svg></div><div class="ttl" style="letter-spacing:0.25px;transform:scaleX(1.1301)">Template Announcements</div><div class="dsc" style="letter-spacing:0.3px;transform:scaleX(1.0884)">Send email announcements about new Marq templates to your users</div></div>

  <div id="help"></div>
<svg id="ic" width="902" height="734" style="position:absolute;left:0;top:0;overflow:visible">
<g transform="translate(-32,-26)">
<!-- logo -->
<circle cx="56.5" cy="51" r="6.4" fill="none" stroke="#10a29d" stroke-width="4.6"/>
<rect x="61.1" y="42.6" width="5" height="22.4" fill="#10a29d"/>
<path d="M67 59 H73.2 L67 65.2 Z" fill="#e4575a"/>
<!-- plus button -->
<rect x="41" y="89" width="37" height="37" rx="7" fill="#2f6bde"/>
<path d="M59.5 102.6 V112.4 M54.6 107.5 H64.4" stroke="#fff" stroke-width="1.4" stroke-linecap="round"/>
<g fill="none" stroke="#2b2c35" stroke-width="1.35" stroke-linejoin="round" stroke-linecap="round">
<!-- home -->
<path d="M54 158.8 L59.4 153.7 L64.8 158.8 V163.8 Q64.8 165.2 63.4 165.2 H55.4 Q54 165.2 54 163.8 Z"/>
<path d="M57.3 165.2 V161.5 Q57.3 159.6 59.4 159.6 Q61.5 159.6 61.5 161.5 V165.2"/>
<!-- flow -->
<rect x="53.9" y="236" width="4.9" height="4.9" rx="1.4"/>
<rect x="60.3" y="242.4" width="4.9" height="4.9" rx="1.4"/>
<path d="M56.3 240.9 V243.6 Q56.3 244.8 57.5 244.8 H60.3"/>
<!-- doc -->
<path d="M56.1 276.5 H61.2 L64.5 279.8 V287.2 Q64.5 288.6 63.1 288.6 H56.1 Q54.7 288.6 54.7 287.2 V277.9 Q54.7 276.5 56.1 276.5 Z"/>
<path d="M61.2 276.8 Q61.5 279.5 64.2 279.8" stroke-width="1.1"/>
<path d="M56.9 280.6 H57.8 M56.9 283.2 H62.2 M56.9 285.6 H62.2"/>
<!-- layout -->
<rect x="53.7" y="317.6" width="11.5" height="4.8" rx="1.5"/>
<rect x="53.7" y="324.6" width="5.3" height="4.8" rx="1.5"/>
<rect x="61.4" y="324.6" width="3.8" height="4.8" rx="1.5"/>
<!-- gear -->
<path d="M58.58 358.15 L60.22 358.15 L61.16 360.15 L62.20 360.75 L64.40 360.56 L65.22 361.99 L63.96 363.80 L63.96 365.00 L65.22 366.81 L64.40 368.24 L62.20 368.05 L61.16 368.65 L60.22 370.65 L58.58 370.65 L57.64 368.65 L56.60 368.05 L54.40 368.24 L53.58 366.81 L54.84 365.00 L54.84 363.80 L53.58 361.99 L54.40 360.56 L56.60 360.75 L57.64 360.15 Z"/>
<circle cx="59.4" cy="364.4" r="2"/>
<!-- chevron -->
<path d="M57.2 628.8 L60.9 632.5 L57.2 636.2" stroke="#5a5b63" stroke-width="1.3"/>
</g>
<!-- active grid -->
<rect x="41" y="182" width="37" height="37" rx="7" fill="#eef3fc"/>
<rect x="53.2" y="194.2" width="12.4" height="12.4" rx="2.2" fill="#2f58b5"/>
<g fill="#fff">
<rect x="54.8" y="195.8" width="2.3" height="2.3"/><rect x="58.25" y="195.8" width="2.3" height="2.3"/><rect x="61.7" y="195.8" width="2.3" height="2.3"/>
<rect x="54.8" y="199.25" width="2.3" height="2.3"/><rect x="58.25" y="199.25" width="2.3" height="2.3"/><rect x="61.7" y="199.25" width="2.3" height="2.3"/>
<rect x="54.8" y="202.7" width="2.3" height="2.3"/><rect x="58.25" y="202.7" width="2.3" height="2.3"/><rect x="61.7" y="202.7" width="2.3" height="2.3"/>
</g>
<!-- progress -->
<circle cx="59.3" cy="684.3" r="12" fill="none" stroke="#e2e2e4" stroke-width="2"/>
<path d="M58.4 672.3 A12 12 0 0 1 62.2 672.7" fill="none" stroke="#2f5fd0" stroke-width="2.2" stroke-linecap="round"/>
<text x="59.4" y="687.8" font-family="Liberation Sans" font-weight="700" font-size="8.6" fill="#26272e" text-anchor="middle">3%</text>
<rect x="41" y="710.6" width="36.5" height="1" fill="#e3e3e5"/>
<!-- avatar -->
<circle cx="59.2" cy="737.8" r="12.9" fill="#2f6bde"/>
<text x="59.2" y="741.6" font-family="Liberation Sans" font-weight="700" font-size="10.5" fill="#fff" text-anchor="middle">BM</text>
<!-- search icon -->
<g fill="none" stroke="#7a7d86" stroke-width="1.35" stroke-linecap="round">
<circle cx="129.6" cy="136" r="4.9"/>
<path d="M133.2 139.6 L136.4 142.8"/>
</g>
<!-- toggle -->
<rect x="884" y="124" width="25" height="25" rx="5" fill="#f2f3f5"/>
<g fill="none" stroke="#8b8c91" stroke-width="1.1">
<rect x="864.3" y="130.6" width="4.6" height="4.6" rx="1.2"/><rect x="871.5" y="130.6" width="4.6" height="4.6" rx="1.2"/>
<rect x="864.3" y="137.6" width="4.6" height="4.6" rx="1.2"/><rect x="871.5" y="137.6" width="4.6" height="4.6" rx="1.2"/>
</g>
<g stroke="#1b1c22" stroke-width="1.5" stroke-linecap="round">
<path d="M893.6 132.6 H902 M893.6 136.5 H902 M893.6 140.4 H902"/>
<path d="M890.6 132.6 h0.1 M890.6 136.5 h0.1 M890.6 140.4 h0.1"/>
</g>
<!-- help -->
<g fill="none" stroke="#fff" stroke-width="1.9" stroke-linecap="round">
<circle cx="887.8" cy="715" r="9.6"/>
<path d="M885 712.6 Q885 709.6 887.9 709.6 Q890.8 709.6 890.8 712.3 Q890.8 714.2 888.6 715.1 Q887.9 715.5 887.9 716.6"/>
</g>
<circle cx="887.9" cy="719.6" r="1.15" fill="#fff"/>
</g>
</svg>

</div>
<div id="rim"></div>
</body></html>
